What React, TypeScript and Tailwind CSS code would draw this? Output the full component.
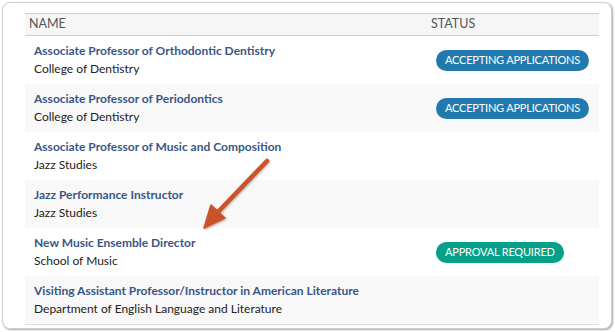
import React from "react";

type Job = {
  title: string;
  unit: string;
  status?: "accepting" | "approval";
};

const jobs: Job[] = [
  { title: "Associate Professor of Orthodontic Dentistry", unit: "College of Dentistry", status: "accepting" },
  { title: "Associate Professor of Periodontics", unit: "College of Dentistry", status: "accepting" },
  { title: "Associate Professor of Music and Composition", unit: "Jazz Studies" },
  { title: "Jazz Performance Instructor", unit: "Jazz Studies" },
  { title: "New Music Ensemble Director", unit: "School of Music", status: "approval" },
  { title: "Visiting Assistant Professor/Instructor in American Literature", unit: "Department of English Language and Literature" },
];

function StatusBadge({ status }: { status: Job["status"] }) {
  if (!status) return null;
  const accepting = status === "accepting";
  return (
    <span
      className={
        accepting
          ? "ml-[10px] inline-flex h-[21px] items-center rounded-full bg-[#2279ae] px-[9px] text-[11px] tracking-[-0.2px] text-white"
          : "ml-[10px] inline-flex h-[21px] items-center rounded-full bg-[#05a088] px-[9px] text-[11px] tracking-[-0.2px] text-white"
      }
    >
      {accepting ? "ACCEPTING APPLICATIONS" : "APPROVAL REQUIRED"}
    </span>
  );
}

export default function App() {
  return (
    <div className="relative h-[332px] w-[615px] bg-white font-['Lato','Open_Sans',sans-serif]">
      <div className="absolute left-[2px] top-[2px] h-[327px] w-[610px] rounded-[8px] border border-[#cfcfcf] bg-white shadow-[1px_1px_2px_rgba(0,0,0,0.35)]">
        <div className="ml-[22px] mt-[10px] w-[574px]">
          <div className="flex h-[23px] items-center border-y border-[#cdcdcd] bg-[#f6f6f6] text-[12.5px] text-[#555]">
            <div className="w-[401px] pl-[4px]">NAME</div>
            <div className="pl-[5px]">STATUS</div>
          </div>
          {jobs.map((job, i) => (
            <div
              key={job.title}
              className={
                i % 2 === 1
                  ? "flex h-[48px] items-center bg-[#f8f8f8]"
                  : "flex h-[48px] items-center bg-white"
              }
            >
              <div className="w-[401px] pl-[9px] text-[12px] leading-[18px]">
                <div className="whitespace-nowrap font-bold text-[#3a5685]">{job.title}</div>
                <div className="text-[#222]">{job.unit}</div>
              </div>
              <div className="flex items-center">
                <StatusBadge status={job.status} />
              </div>
            </div>
          ))}
          <div className="border-t border-[#dcdcdc]" />
        </div>
      </div>
      <svg
        className="pointer-events-none absolute left-0 top-0"
        width="615"
        height="332"
        viewBox="0 0 615 332"
      >
        <defs>
          <filter id="sh" x="-20%" y="-20%" width="140%" height="140%">
            <feDropShadow dx="0.5" dy="1" stdDeviation="1" floodColor="#000" floodOpacity="0.35" />
          </filter>
        </defs>
        <g filter="url(#sh)" fill="#cb532c" stroke="#cb532c">
          <line x1="267" y1="161" x2="217" y2="213" strokeWidth="4.5" strokeLinecap="round" />
          <polygon points="204,228 211,205 225,218" strokeWidth="1.5" strokeLinejoin="round" />
        </g>
      </svg>
    </div>
  );
}
